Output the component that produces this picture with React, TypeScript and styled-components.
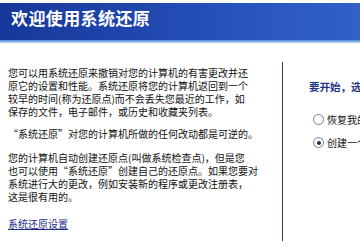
import React from "react";
import styled, { createGlobalStyle } from "styled-components";

const Global = createGlobalStyle`
  html, body { margin: 0; padding: 0; background: #ffffff; }
  body { font-family: "Noto Sans CJK SC", "Noto Sans", sans-serif; }
`;

const Page = styled.div`
  width: 360px;
  height: 241px;
  overflow: hidden;
  background: #ffffff;
  padding-top: 3px;
  box-sizing: border-box;
`;

const Header = styled.div`
  height: 37px;
  box-sizing: border-box;
  padding: 5px 0 0 11px;
  background: linear-gradient(90deg, #17389a 0%, #2047ae 40%, #2b57c2 75%, #3060c8 100%);
`;

const Title = styled.h1`
  margin: 0;
  font-family: "Noto Sans CJK SC", sans-serif;
  font-size: 17px;
  line-height: 20px;
  font-weight: 700;
  color: #ffffff;
  letter-spacing: 0.4px;
`;

const Stripe = styled.div`
  height: 3px;
  background: linear-gradient(180deg, #4f7fd2 0%, #86adea 50%, #c6daf5 100%);
`;

const Body = styled.div`
  display: grid;
  grid-template-columns: 282px 1fr;
`;

const Left = styled.div`
  padding: 23px 0 0 8px;
  font-size: 10px;
  line-height: 13px;
`;

const Para = styled.p<{ $gap?: number }>`
  margin: 0 0 ${(p) => p.$gap ?? 9}px 0;
  font-size: 10px;
  line-height: 13px;
  color: #111111;
  white-space: nowrap;
`;

const Link = styled.a`
  display: block;
  width: fit-content;
  margin-top: 14px;
  font-size: 10px;
  line-height: 13px;
  color: #1c2a86;
  text-decoration: underline;
`;

const Right = styled.div`
  margin-top: 19px;
  border-left: 1px solid #3b4562;
  padding: 18px 0 0 26px;
  height: 180px;
  white-space: nowrap;
  overflow: hidden;
`;

const Heading = styled.div`
  font-size: 10.5px;
  line-height: 13px;
  font-weight: 700;
  color: #1e3589;
  margin-bottom: 20px;
`;

const Options = styled.div`
  display: flex;
  flex-direction: column;
  gap: 10px;
  padding-left: 4px;
`;

const Option = styled.label`
  display: flex;
  align-items: center;
  gap: 3px;
  font-size: 10px;
  line-height: 13px;
  color: #111111;
`;

const Radio = styled.span<{ $checked?: boolean }>`
  position: relative;
  width: 9px;
  height: 9px;
  flex: none;
  border-radius: 50%;
  border: 1px solid #6f7f99;
  background: #ffffff;
  &::after {
    content: "";
    position: absolute;
    left: 2.5px;
    top: 2.5px;
    width: 4px;
    height: 4px;
    border-radius: 50%;
    background: #2a3040;
    display: ${(p) => (p.$checked ? "block" : "none")};
  }
`;

export default function App() {
  return (
    <>
      <Global />
      <Page>
        <Header>
          <Title>欢迎使用系统还原</Title>
        </Header>
        <Stripe />
        <Body>
          <Left>
            <Para>
              您可以用系统还原来撤销对您的计算机的有害更改并还
              <br />
              原它的设置和性能。系统还原将您的计算机返回到一个
              <br />
              较早的时间(称为还原点)而不会丢失您最近的工作，如
              <br />
              保存的文件，电子邮件，或历史和收藏夹列表。
            </Para>
            <Para $gap={11}>“系统还原”对您的计算机所做的任何改动都是可逆的。</Para>
            <Para $gap={0}>
              您的计算机自动创建还原点(叫做系统检查点)，但是您
              <br />
              也可以使用“系统还原”创建自己的还原点。如果您要对
              <br />
              系统进行大的更改，例如安装新的程序或更改注册表，
              <br />
              这是很有用的。
            </Para>
            <Link href="#">系统还原设置</Link>
          </Left>
          <Right>
            <Heading>要开始，选择以下任务：</Heading>
            <Options>
              <Option>
                <Radio />
                恢复我的计算机到一个较早的时间
              </Option>
              <Option>
                <Radio $checked />
                创建一个还原点
              </Option>
            </Options>
          </Right>
        </Body>
      </Page>
    </>
  );
}
